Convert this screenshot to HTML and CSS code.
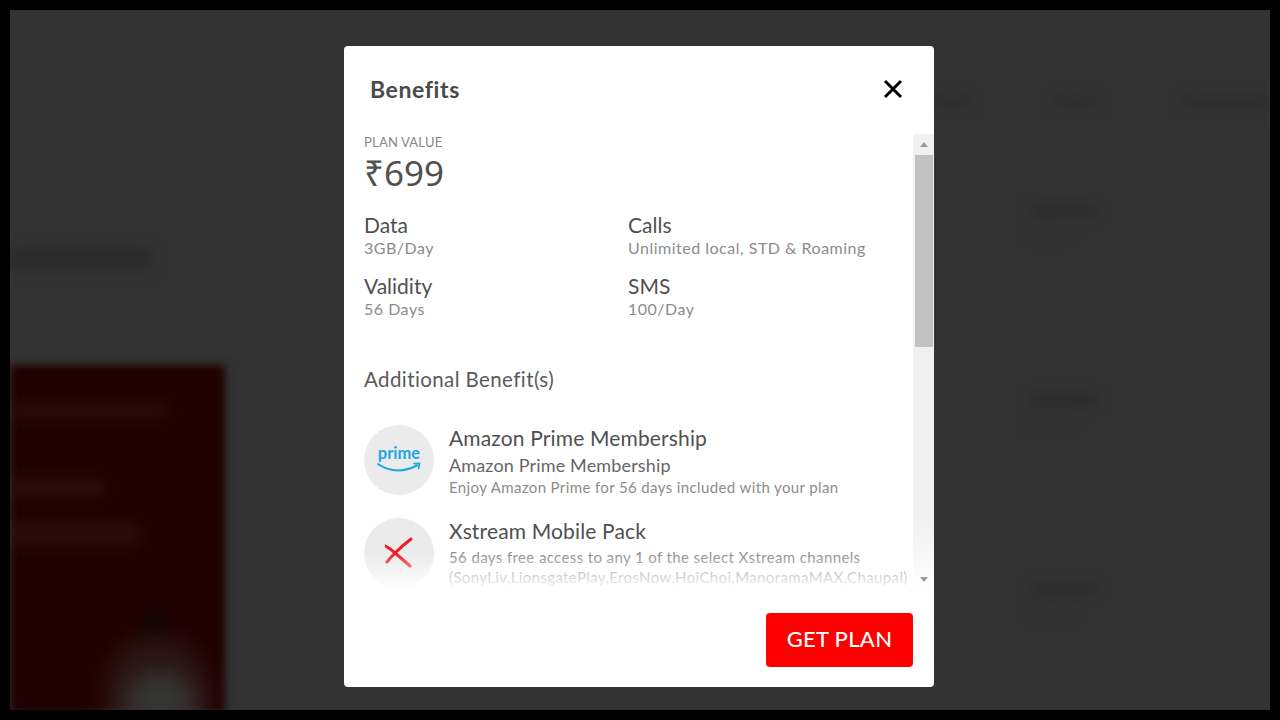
FILE: index.html
```html
<!DOCTYPE html>
<html lang="en">
<head>
<meta charset="utf-8">
<title>Benefits</title>
<link rel="stylesheet" href="styles.css">
</head>
<body>
<div class="frame">
  <div class="page" aria-hidden="true">
    <div class="page-nav">
      <span class="blob nav-a"></span>
      <span class="blob nav-b"></span>
      <span class="blob nav-c"></span>
    </div>
    <div class="page-main">
      <div class="page-left">
        <span class="blob page-heading"></span>
        <div class="promo">
          <span class="promo-line l1"></span>
          <span class="promo-line l2"></span>
          <span class="promo-line l3"></span>
          <span class="promo-body"></span>
          <span class="promo-chest"></span>
          <span class="promo-head"></span>
        </div>
      </div>
      <div class="page-right">
        <div class="side-item"><span class="blob side-title"></span><span class="blob side-sub"></span></div>
        <div class="side-item"><span class="blob side-title"></span><span class="blob side-sub"></span></div>
        <div class="side-item"><span class="blob side-title"></span><span class="blob side-sub"></span></div>
      </div>
    </div>
  </div>

  <div class="modal">
    <header class="modal-head">
      <h2 class="modal-title">Benefits</h2>
      <svg class="close" viewBox="0 0 20 20" width="20" height="20"><path d="M2 2 L18 18 M18 2 L2 18" fill="none" stroke="#000" stroke-width="3"/></svg>
    </header>
    <div class="modal-scroll">
      <div class="modal-body">
        <div class="plan-label">PLAN VALUE</div>
        <div class="plan-price">₹699</div>
        <div class="facts">
          <div class="fact"><div class="fact-name">Data</div><div class="fact-value">3GB/Day</div></div>
          <div class="fact"><div class="fact-name">Calls</div><div class="fact-value">Unlimited local, STD &amp; Roaming</div></div>
          <div class="fact"><div class="fact-name">Validity</div><div class="fact-value">56 Days</div></div>
          <div class="fact"><div class="fact-name">SMS</div><div class="fact-value">100/Day</div></div>
        </div>
        <div class="extra-title">Additional Benefit(s)</div>
        <div class="benefit">
          <div class="benefit-icon">
            <svg viewBox="0 -10 46 50" width="46" height="50">
              <text x="23" y="13.5" text-anchor="middle" class="prime-word">prime</text>
              <path d="M2 19 Q20 31 41 20.5" fill="none" stroke="#1aa8e0" stroke-width="2" stroke-linecap="round"/>
              <path d="M38 18.6 L43.5 18.4 L42.6 23.5" fill="none" stroke="#1aa8e0" stroke-width="1.7" stroke-linecap="round"/>
            </svg>
          </div>
          <div class="benefit-text">
            <div class="benefit-name">Amazon Prime Membership</div>
            <div class="benefit-sub">Amazon Prime Membership</div>
            <div class="benefit-desc">Enjoy Amazon Prime for 56 days included with your plan</div>
          </div>
        </div>
        <div class="benefit">
          <div class="benefit-icon">
            <svg viewBox="0 0 28 32" width="28" height="32">
              <path d="M26 2 Q17 9 10 16 Q6 20 2 25" fill="none" stroke="#f01c24" stroke-width="3" stroke-linecap="round"/>
              <path d="M0.5 9 Q6 12 10 16 Q17 22 25 29" fill="none" stroke="#f01c24" stroke-width="3" stroke-linecap="round"/>
            </svg>
          </div>
          <div class="benefit-text">
            <div class="benefit-name">Xstream Mobile Pack</div>
            <div class="benefit-desc tight">56 days free access to any 1 of the select Xstream channels (SonyLiv,LionsgatePlay,ErosNow,HoiChoi,ManoramaMAX,Chaupal)</div>
          </div>
        </div>
        <div class="fade"></div>
      </div>
      <div class="scrollbar">
        <span class="arrow up"></span>
        <span class="thumb"></span>
        <span class="arrow down"></span>
      </div>
    </div>
    <footer class="modal-foot">
      <button class="get-plan" type="button">GET PLAN</button>
    </footer>
  </div>
</div>
</body>
</html>
```
FILE: styles.css
```css
* { box-sizing: border-box; }
html, body { margin: 0; height: 100%; }
body { background: #000; font-family: "Lato", "Noto Sans", "DejaVu Sans", sans-serif; overflow: hidden; }
.frame { position: relative; width: 1280px; height: 720px; padding: 10px; }
.page { width: 1260px; height: 700px; background: #333; overflow: hidden; display: flex; flex-direction: column; }
.blob { display: block; filter: blur(6px); }
.page-nav { height: 104px; padding: 87px 0 0 924px; display: flex; align-items: flex-start; flex: none; }
.nav-a { width: 36px; height: 12px; margin-right: 82px; background: #2d2d2d; }
.nav-b { width: 46px; height: 12px; margin-right: 84px; background: #2d2d2d; }
.nav-c { width: 90px; height: 12px; background: #2d2d2d; }
.page-main { display: flex; flex: 1; min-height: 0; }
.page-left { width: 1020px; flex: none; }
.page-heading { width: 142px; height: 20px; margin-top: 134px; background: #292929; filter: blur(7px); }
.promo { width: 215px; height: 348px; margin-top: 97px; background: #200000; filter: blur(4px); overflow: hidden; display: flex; flex-direction: column; position: relative; }
.promo-line { display: block; background: #290c0c; filter: blur(6px); }
.l1 { width: 160px; height: 16px; margin-top: 38px; }
.l2 { width: 95px; height: 22px; margin-top: 58px; }
.l3 { width: 130px; height: 26px; margin-top: 22px; }
.promo-body { position: absolute; left: 92px; top: 268px; width: 110px; height: 130px; border-radius: 50%; background: #2a1414; filter: blur(10px); }
.promo-chest { position: absolute; left: 115px; top: 305px; width: 70px; height: 70px; border-radius: 50%; background: #353533; filter: blur(10px); }
.promo-head { position: absolute; left: 134px; top: 245px; width: 24px; height: 24px; border-radius: 50%; background: #100606; filter: blur(7px); }
.page-right { padding-top: 90px; display: flex; flex-direction: column; gap: 156px; }
.side-item { display: flex; flex-direction: column; gap: 14px; }
.side-title { width: 66px; height: 12px; background: #2b2b2b; }
.side-sub { width: 40px; height: 8px; background: #303030; }

.modal { position: absolute; left: 344px; top: 46px; width: 590px; height: 641px; background: #fff; border-radius: 4px; display: flex; flex-direction: column; color: #444; }
.modal-head { height: 88px; flex: none; display: flex; align-items: center; justify-content: space-between; padding: 0 31px 2px 26px; }
.modal-title { margin: 0; font-size: 23px; font-weight: 700; color: #4a4a4a; letter-spacing: .6px; }
.close { flex: none; margin-top: 0; }
.modal-scroll { height: 457px; flex: none; display: flex; }
.modal-body { position: relative; flex: 1; min-width: 0; padding: 0 0 0 20px; overflow: hidden; }
.plan-label { font-size: 13px; line-height: 16px; color: #888; letter-spacing: .2px; }
.plan-price { font-family: "Noto Sans", sans-serif; font-size: 35px; line-height: 46px; color: #505050; margin-bottom: 16px; }
.facts { display: grid; grid-template-columns: 264px 1fr; row-gap: 15px; }
.fact-name { font-size: 21px; line-height: 26px; color: #505050; }
.fact-value { font-size: 16px; line-height: 20px; color: #8c8c8c; letter-spacing: .5px; }
.extra-title { font-size: 20.5px; line-height: 26px; color: #5a5a5a; letter-spacing: .4px; margin: 47px 0 33px; }
.benefit { display: flex; gap: 15px; margin-bottom: 23px; }
.benefit:first-of-type { margin-bottom: 23px; }
.benefit + .benefit { margin-top: -2px; }
.benefit-icon { width: 70px; height: 70px; flex: none; border-radius: 50%; background: #ebebeb; display: flex; align-items: center; justify-content: center; }
.prime-word { font-family: "Lato", sans-serif; font-size: 16.5px; font-weight: 700; fill: #1aa8e0; }
.benefit-text { min-width: 0; flex: 1; padding-top: 1px; }
.benefit-name { font-size: 21px; line-height: 24px; color: #505050; letter-spacing: .15px; }
.benefit-sub { font-size: 18px; line-height: 26px; color: #666; letter-spacing: .15px; margin-top: 2px; }
.benefit-desc { font-size: 15px; line-height: 20px; color: #8c8c8c; letter-spacing: .38px; margin-top: -1px; }
.benefit-desc.tight { margin-top: 4px; }
.fade { position: absolute; left: 0; right: 0; bottom: 0; height: 38px; background: linear-gradient(to bottom, rgba(255,255,255,0), #fff); }
.scrollbar { width: 21px; flex: none; background: linear-gradient(to bottom, #f1f1f1 85%, #fff 100%); display: flex; flex-direction: column; align-items: center; padding: 0 1px 0 2px; }
.arrow { flex: none; width: 0; height: 0; border-left: 4px solid transparent; border-right: 4px solid transparent; }
.arrow.up { border-bottom: 5px solid #9a9a9a; margin: 8px 0 8px; }
.arrow.down { border-top: 5px solid #9a9a9a; margin-top: 230px; }
.thumb { display: block; width: 100%; height: 192px; background: #c1c1c1; flex: none; }
.modal-foot { flex: 1; display: flex; justify-content: flex-end; align-items: flex-start; padding: 22px 21px 0 0; }
.get-plan { width: 147px; height: 54px; border: 0; border-radius: 4px; background: #f00; color: #fff; font: 500 22px "Lato", sans-serif; letter-spacing: .3px; padding: 0 0 3px; }
```
